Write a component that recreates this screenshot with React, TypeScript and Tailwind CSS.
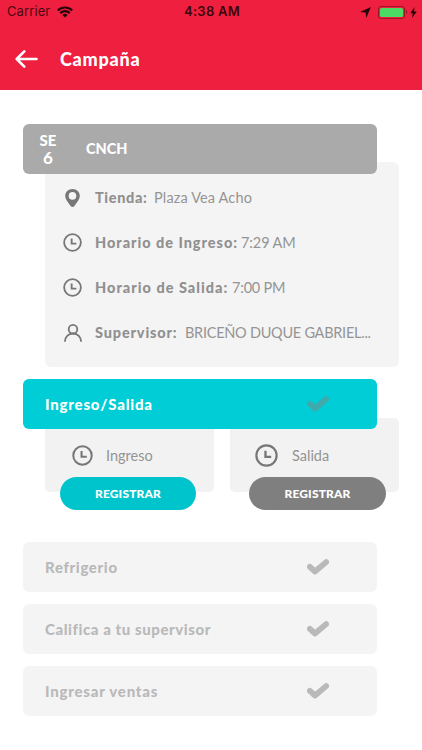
const ClockIcon = ({ className }: { className: string }) => (
  <svg className={className} viewBox="0 0 20 20" fill="none" stroke="currentColor">
    <circle cx="10" cy="10" r="8.800" strokeWidth="1.900" />
    <path d="M9.100 5.800v5.400h5" strokeWidth="2" />
  </svg>
);

const PinIcon = () => (
  <svg className="w-[15px] h-[18px]" viewBox="0 0 15 18" fill="currentColor">
    <path
      fillRule="evenodd"
      d="M7.500 0C3.300 0 .2 3 .2 7c0 3 2.300 5.800 5.400 9.900 1 1.400 2.800 1.400 3.800 0C12.500 12.800 14.800 10 14.800 7c0-4-3.100-7-7.300-7zm0 3.100a3.800 3.800 0 1 1 0 7.600 3.800 3.800 0 0 1 0-7.600z"
    />
  </svg>
);

const UserIcon = () => (
  <svg className="w-[18px] h-[18px]" viewBox="0 0 18 18" fill="none" stroke="currentColor" strokeWidth="1.800">
    <circle cx="9" cy="5.200" r="4.300" />
    <path d="M.9 17.800c0-5 3.400-8.300 8.100-8.300s8.100 3.300 8.100 8.300" />
  </svg>
);

const CheckIcon = ({ className }: { className: string }) => (
  <svg className={className} viewBox="0 0 22 16" fill="none" stroke="currentColor" strokeWidth="5.800" strokeLinecap="round" strokeLinejoin="round">
    <path d="M2.900 7.800L8 12.500L19.100 3.100" />
  </svg>
);

const details = [
  { icon: <PinIcon />, label: 'Tienda:', value: 'Plaza Vea Acho', labelClass: 'w-[59px] tracking-[0.65px]', valueClass: 'tracking-[0.15px]' },
  { icon: <ClockIcon className="w-[19px] h-[19px]" />, label: 'Horario de Ingreso:', value: '7:29 AM', labelClass: 'w-[146px] tracking-[0.97px]', valueClass: 'tracking-[-0.1px]' },
  { icon: <ClockIcon className="w-[19px] h-[19px]" />, label: 'Horario de Salida:', value: '7:00 PM', labelClass: 'w-[137px] tracking-[1.02px]', valueClass: 'tracking-[-0.2px]' },
  { icon: <UserIcon />, label: 'Supervisor:', value: 'BRICEÑO DUQUE GABRIEL...', labelClass: 'w-[90px] tracking-[0.85px]', valueClass: 'tracking-[-0.26px]' },
];

const steps = [
  { name: 'Refrigerio', textClass: 'tracking-[0.65px]' },
  { name: 'Califica a tu supervisor', textClass: 'tracking-[0.57px]' },
  { name: 'Ingresar ventas', textClass: 'tracking-[0.78px]' },
];

const StatusBar = () => (
  <div className="flex items-center h-6 pl-[7px] pr-[5px] text-[#4d0712] font-['Inter','Liberation_Sans',sans-serif] whitespace-nowrap">
    <div className="flex items-center flex-1 gap-[7px]">
      <span className="text-[13px] tracking-[0.1px]">Carrier</span>
      <svg className="w-4 h-3 text-[#26040a]" viewBox="0 0 16 12" fill="none" stroke="currentColor" strokeWidth="2.200">
        <path d="M.8 4.400a10.400 10.400 0 0 1 14.400 0M3.300 7.100a6.800 6.800 0 0 1 9.400 0" />
        <path d="M8 11.600L5.400 9a3.800 3.800 0 0 1 5.200 0z" fill="currentColor" stroke="none" />
      </svg>
    </div>
    <span className="text-[13px] font-semibold tracking-[0.25px] text-[#3a050d]">4:38 AM</span>
    <div className="flex items-center justify-end flex-1 text-[#26040a]">
      <svg className="w-[11px] h-[11px] mr-[7px]" viewBox="0 0 11 11" fill="currentColor">
        <path d="M10.900.1L6.200 10.900L5.600 5.500L.1 5z" />
      </svg>
      <div className="w-[27px] h-[13px] rounded-[3px] border border-[#9c1426] p-px">
        <div className="w-full h-full rounded-[1.5px] bg-[#4cd964]" />
      </div>
      <div className="w-[1.5px] h-[4px] ml-px rounded-r bg-[#9c1426]" />
      <svg className="w-[7px] h-[11px] ml-[3px]" viewBox="0 0 7 11" fill="currentColor">
        <path d="M4.600 0L.2 6.200h2.600L2 11l4.800-6.500H4z" />
      </svg>
    </div>
  </div>
);

const Register = ({ label, clockClass, buttonClass, gapClass }: any) => (
  <div className="w-[169px] h-[74px] rounded-[5px] bg-[#f2f2f2] text-[#777] pt-[25px]">
    <div className={`flex items-center h-6 ${gapClass}`}>
      <ClockIcon className={clockClass} />
      <span className="pt-px text-[14.5px] text-[#949494]">{label}</span>
    </div>
    <button type="button" className={`block h-[33px] mt-[10px] rounded-full text-white text-[12px] font-black tracking-[0.15px] ${buttonClass}`}>
      REGISTRAR
    </button>
  </div>
);

const App = () => {
  return (
    <div className="w-full h-[750px] overflow-hidden bg-white font-['Lato','Liberation_Sans',sans-serif]">
      <header className="h-[90px] bg-[#ef203f]">
        <StatusBar />
        <div className="flex items-center h-[70px] pl-[15px] gap-[22px] text-white">
          <svg className="w-[23px] h-[18px]" viewBox="0 0 23 18" fill="none" stroke="currentColor" strokeWidth="2.600" strokeLinecap="round" strokeLinejoin="round">
            <path d="M9.300 1.400L1.700 9l7.600 7.600M1.700 9h19.800" />
          </svg>
          <h1 className="text-[18px] font-black leading-6 tracking-[0.75px]">Campaña</h1>
        </div>
      </header>

      <main className="pl-[23px] pt-[34px]">
        <div className="relative z-10 flex items-center w-[354px] h-[50px] rounded-[6px] bg-[#aaa] text-white font-black">
          <div className="w-[50px] text-center text-[15px] leading-[18px]">
            <div>SE</div>
            <div className="text-[17px]">6</div>
          </div>
          <span className="ml-[13px] text-[14.5px]">CNCH</span>
        </div>

        <section className="w-[354px] h-[205px] -mt-3 ml-[22px] pt-[13px] rounded-[6px] bg-[#f4f4f4]">
          {details.map((item) => (
            <div key={item.label} className="flex items-center h-[45px] text-[14.5px] text-[#949494] whitespace-nowrap">
              <div className="flex justify-center w-[19px] ml-[18px] mr-[13px] text-[#777]">{item.icon}</div>
              <span className={`font-black text-[#909090] ${item.labelClass}`}>{item.label}</span>
              <span className={item.valueClass}>{item.value}</span>
            </div>
          ))}
        </section>

        <div className="relative z-10 flex items-center w-[354px] h-[50px] mt-3 pl-[22px] rounded-[6px] bg-[#00cdd5] text-white">
          <span className="flex-1 text-[15px] font-black tracking-[0.8px]">Ingreso/Salida</span>
          <CheckIcon className="w-[22px] h-4 mr-[48px] text-[#40a9ac]" />
        </div>

        <div className="flex gap-4 -mt-[11px] ml-[22px]">
          <Register label="Ingreso" clockClass="w-[21px] h-[21px]" gapClass="ml-[27px] gap-[13px]" buttonClass="w-[136px] ml-[15px] bg-[#00c4cc]" />
          <Register label="Salida" clockClass="w-[23px] h-[23px]" gapClass="ml-[25px] gap-[14px]" buttonClass="w-[137px] ml-[19px] bg-[#7f7f7f]" />
        </div>

        <div className="flex flex-col gap-3 mt-[50px]">
          {steps.map((step) => (
            <div key={step.name} className="flex items-center w-[354px] h-[50px] pl-[22px] rounded-[6px] bg-[#f4f4f4] text-[#b9b9b9]">
              <span className={`flex-1 text-[15px] font-black ${step.textClass}`}>{step.name}</span>
              <CheckIcon className="w-[22px] h-4 mr-[48px]" />
            </div>
          ))}
        </div>
      </main>
    </div>
  );
};

export default App;
